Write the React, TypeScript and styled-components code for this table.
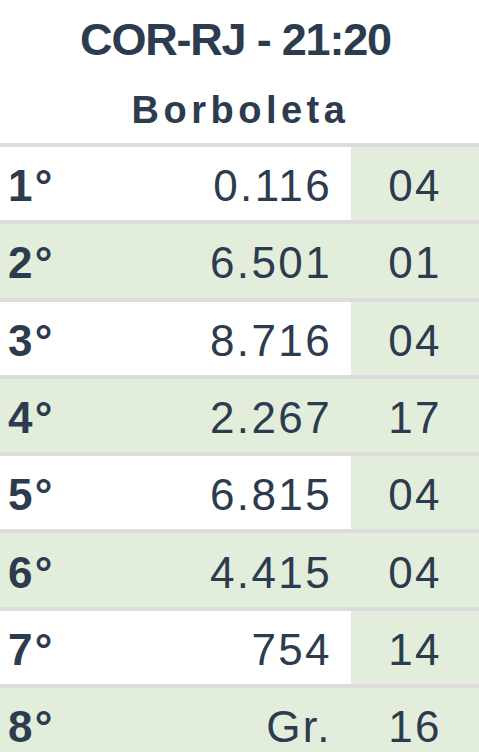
import styled, { createGlobalStyle } from "styled-components"

const GlobalStyle = createGlobalStyle`
  body {
    margin: 0;
    background: #ffffff;
    font-family: "Liberation Sans", Arial, sans-serif;
    color: #2c3b4e;
  }
`

const results = [
  { pos: "1°", value: "0.116", code: "04" },
  { pos: "2°", value: "6.501", code: "01" },
  { pos: "3°", value: "8.716", code: "04" },
  { pos: "4°", value: "2.267", code: "17" },
  { pos: "5°", value: "6.815", code: "04" },
  { pos: "6°", value: "4.415", code: "04" },
  { pos: "7°", value: "754", code: "14" },
  { pos: "8°", value: "Gr.", code: "16" },
]

const App = () => {
  return <Page>
    <GlobalStyle />
    <Header>
      <Title>COR-RJ - 21:20</Title>
      <Subtitle>Borboleta</Subtitle>
    </Header>

    <Table>
      {results.map((r, i) => (
        <Row key={r.pos} striped={i % 2 === 1}>
          <Position>{r.pos}</Position>
          <Value>{r.value}</Value>
          <Code>{r.code}</Code>
        </Row>
      ))}
    </Table>
  </Page>
}

const Page = styled.div`
  width: 100%;
  min-height: 752px;
  overflow: hidden;
`

const Header = styled.header`
  display: flex;
  flex-direction: column;
  align-items: center;
  gap: 10px;
  padding: 10px 0 3px;
`

const Title = styled.h1`
  margin: 0;
  font-size: 45px;
  line-height: 60px;
  font-weight: 700;
  letter-spacing: -1.2px;
  padding-right: 8px;
`

const Subtitle = styled.h2`
  margin: 0;
  font-size: 38px;
  line-height: 60px;
  font-weight: 700;
  letter-spacing: 4.5px;
  padding-left: 2px;
`

const Table = styled.div`
  display: flex;
  flex-direction: column;
`

const Row = styled.div<{
  striped: boolean
}>`
  display: grid;
  grid-template-columns: 90px 1fr 128px;
  height: 73.3px;
  border-top: 4px solid #dcdcdc;
  background: ${p => p.striped ? '#e2eedb' : '#ffffff'};
  font-size: 44px;
  letter-spacing: 2.4px;
`

const Cell = styled.div`
  display: flex;
  align-items: center;
  padding-top: 5px;
`

const Position = styled(Cell)`
  padding-left: 8px;
  font-weight: 700;
`

const Value = styled(Cell)`
  justify-content: flex-end;
  padding-right: 19px;
`

const Code = styled(Cell)`
  justify-content: center;
  background: #e2eedb;
`

export default App;
